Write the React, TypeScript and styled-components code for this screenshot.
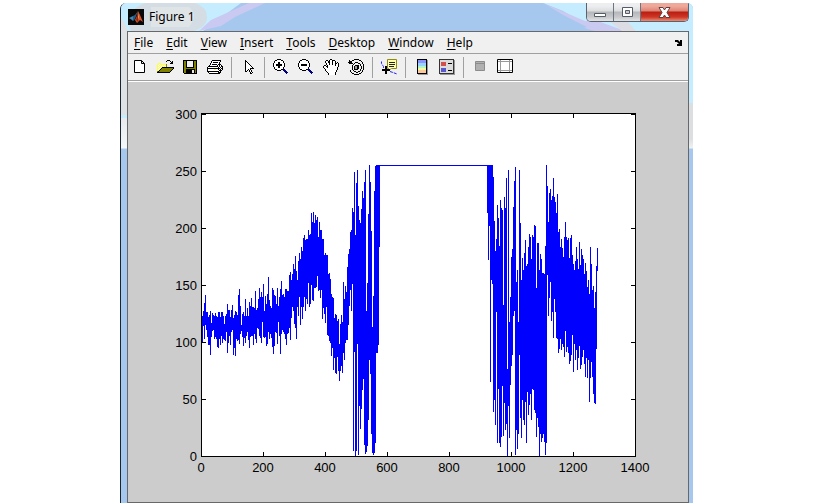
import React from "react";
import styled, { createGlobalStyle } from "styled-components";

const GlobalStyle = createGlobalStyle`
  *, *::before, *::after { box-sizing: border-box; }
  body { margin: 0; background: #fff; color: #000; }
`;

const Page = styled.div`
  padding: 3px 126px 0 120px;
`;

const Window = styled.main`
  position: relative;
  padding: 0 4px 0 6px;
  border-left: 1px solid #1c2430;
  border-radius: 6px 6px 0 0;
  overflow: hidden;
  background:
    linear-gradient(#dfe2e4 0 112px, #c5ecff 112px 115px, #e8ebed 115px, #f4f7f9 145px, #a6c8ee 146px) 0 0 / 50% 100% no-repeat,
    linear-gradient(#c5ecff 0 100px, #dcdfe2 100px 136px, #eef2f5 145px, #a6c8ee 146px);
`;

const Glass = styled.svg<{ $side: "left" | "right" }>`
  position: absolute;
  top: 0;
  ${(p) => p.$side}: 0;
`;

const TitleBar = styled.header`
  position: relative;
  display: flex;
  align-items: flex-start;
  height: 28px;
  padding-left: 1px;
`;

const Title = styled.h1`
  flex: 1;
  display: flex;
  align-items: center;
  gap: 5px;
  margin: 0;
  height: 28px;
  font: 400 12px/16px "Noto Sans", "Open Sans", sans-serif;
`;

const Controls = styled.div`
  display: flex;
  height: 19px;
  border: 1px solid #59636f;
  border-top: 0;
  border-radius: 0 0 5px 5px;
  overflow: hidden;
`;

const ControlButton = styled.button<{ $close?: boolean }>`
  display: flex;
  align-items: center;
  justify-content: center;
  width: ${(p) => (p.$close ? 47 : 27)}px;
  padding: 0;
  border: 0;
  border-right: ${(p) => (p.$close ? "0" : "1px solid #6d7680")};
  background: ${(p) =>
    p.$close
      ? "linear-gradient(#eea99b 0 3px, #dd8475 8px, #b91d10 9px, #cf3626 14px, #e58f75)"
      : "linear-gradient(#eceef0 0 3px, #dcdddf 8px, #b5b8bb 9px, #c6c8ca 14px, #e2e4e6)"};
`;

const Frame = styled.div`
  border: 1px solid #686868;
  background: #f0f0f0;
`;

const MenuBar = styled.nav`
  display: flex;
  align-items: center;
  gap: 13px;
  height: 22px;
  padding: 0 5px 0 6px;
  border-bottom: 1px solid #a0a0a0;
`;

const MenuButton = styled.button`
  padding: 0;
  border: 0;
  background: none;
  color: #000;
  font: 400 12px/18px "Noto Sans", "Open Sans", sans-serif;
  text-underline-offset: 2px;
`;

const DockButton = styled.button`
  display: flex;
  margin-left: auto;
  padding: 0;
  border: 0;
  background: none;
`;

const ToolBar = styled.div`
  display: flex;
  align-items: center;
  height: 27px;
  border-bottom: 1px solid #a0a0a4;
`;

const ToolButton = styled.button`
  display: flex;
  align-items: center;
  justify-content: center;
  width: 25px;
  height: 26px;
  padding: 0;
  border: 0;
  background: none;
`;

const Separator = styled.span`
  width: 1px;
  height: 21px;
  margin: 0 4px 0 3px;
  background: #a0a0a0;
`;

const Figure = styled.section`
  border-top: 1px solid #fff;
  background: #ccc;
`;

const Chart = styled.svg`
  display: block;
  width: 100%;
  font: 13px "Liberation Sans", Arial, sans-serif;
`;

/* ---------- icons ---------- */

const palette: Record<string, string> = {
  k: "#000",
  w: "#fff",
  y: "#ffff4a",
  o: "#808000",
  g: "#a0a0a0",
  n: "#000080",
};

function Bitmap({ rows, left = 0, top = 0 }: { rows: string[]; left?: number; top?: number }) {
  return (
    <>
      {Object.keys(palette).map((key) => {
        let d = "";
        rows.forEach((row, y) =>
          [...row].forEach((c, x) => {
            if (c === key) d += `M${x + left} ${y + top}h1v1h-1z`;
          })
        );
        return d ? <path key={key} d={d} fill={palette[key]} /> : null;
      })}
    </>
  );
}

const openRows = [
  "..........kkk....",
  ".........k...k.k.",
  "..............kk.",
  ".yyy.........kkk.",
  "yywyyyyyyo.......",
  "ywywywywyo.......",
  "yywywywywo.......",
  "ywywykkkkkkkkkkkk",
  "yywykoooooooooook",
  "ywykoooooooooook.",
  "yykoooooooooook..",
  "okoooooooooook...",
  "kkkkkkkkkkkkk....",
];
const printRows = [
  ".....kkkkkkkkk...",
  "....kwwwwwwwwk...",
  "....kwkkkkkwk....",
  "...kwwwwwwwwk....",
  "...kwkkkkkwkkk...",
  "..kwwwwwwwkwkwk..",
  ".kkkkkkkkkkwkwkk.",
  "kwwwwwwwwwwkwkwk.",
  "kkkkkkkkkkkkkwkk.",
  "kwwwwwwyywwkwkwk.",
  "kwwwwwwwwwwwkkk..",
  "kkkkkkkkkkkkwk...",
  ".kwwwwwwwwwkkk...",
  "..kkkkkkkkkkk....",
];
const cursorRows = [
  "k", "kk", "kwk", "kwwk", "kwwwk", "kwwwwk", "kwwwwwk", "kwwwwwwk",
  "kwwwwkkkk", "kwwkwk", "kwk.kwk", "kk..kwk", ".....kwk", ".....kk",
];
const zoomInRows = [
  "....kkkk.......",
  "..kkwwwwkk.....",
  ".kwwwwwwwwk....",
  ".kwwwkkwwwk....",
  "kwwwwkkwwwwk...",
  "kwwkkkkkkwwk...",
  "kwwkkkkkkwwk...",
  "kwwwwkkwwwwk...",
  ".kwwwkkwwwk....",
  ".kwwwwwwwwk....",
  "..kkwwwwkknn...",
  "....kkkk..nnn..",
  "...........nnn.",
  "............nnn",
  ".............n.",
];
const zoomOutRows = zoomInRows.map((row, y) =>
  y === 3 || y === 4 || y === 7 || y === 8 ? row.replace("kkww", "wwww") : row
);
const handRows = [
  ".......kk........",
  "...kk.kwwkkk.....",
  "..kwwkkwwkwwk....",
  "..kwwkkwwkwwk.k..",
  "...kwwkwwkwwkkwk.",
  "...kwwkwwkwwkwwk.",
  ".kk.kwwwwwwwkwwk.",
  "kwwkkwwwwwwwwwwk.",
  "kwwwkwwwwwwwwwk..",
  ".kwwwwwwwwwwwwk..",
  "..kwwwwwwwwwwwk..",
  "..kwwwwwwwwwwk...",
  "...kwwwwwwwwwk...",
  "....kwwwwwwwk....",
  ".....kwwwwwwk....",
  ".....kwwwwwwk....",
];
const rotateRows = [
  "......kkkkk......",
  ".k..kk.....kk....",
  ".kkk.........k...",
  "kkkk...kkk....k..",
  ".kkkk.k...kk..k..",
  ".....k......k..k.",
  "....k..kkkk.k..k.",
  "....k.kggkk..k.k.",
  "....k.kggkk..k.k.",
  "....k.kggkk..k.k.",
  "....k.kkkk..k..k.",
  "..k..k......k.k..",
  "..k...kk..kk..k..",
  "...k....kk...k...",
  "....kk.....kk....",
  "......kkkkk......",
];

type Tool = { label: string; art: React.ReactNode };

const tools: (Tool | null)[] = [
  {
    label: "New Figure",
    art: <path d="M2.5 1.5h7l3 3v9h-10zM9.5 1.5v3h3" fill="#fff" stroke="#000" />,
  },
  { label: "Open File", art: <Bitmap rows={openRows} top={1} /> },
  {
    label: "Save Figure",
    art: (
      <g shapeRendering="crispEdges">
        <path d="M1 1h14v14h-13l-1-1z" />
        <path d="M2 2h2v6h8v-6h2v12h-12z" fill="#808000" />
        <path d="M4 2h8v6h-8z" fill="#f0f0f0" />
        <path d="M4 1h1v7h-1zM11 1h1v7h-1zM4 8h8v1h-8zM4 10h9v4h-9z" />
        <path d="M10 11h2v3h-2z" fill="#e8e8e8" />
      </g>
    ),
  },
  { label: "Print Figure", art: <Bitmap rows={printRows} top={1} /> },
  null,
  { label: "Edit Plot", art: <Bitmap rows={cursorRows} left={5} top={1} /> },
  null,
  { label: "Zoom In", art: <Bitmap rows={zoomInRows} /> },
  { label: "Zoom Out", art: <Bitmap rows={zoomOutRows} /> },
  { label: "Pan", art: <Bitmap rows={handRows} /> },
  { label: "Rotate 3D", art: <Bitmap rows={rotateRows} /> },
  null,
  {
    label: "Data Cursor",
    art: (
      <>
        <path d="M.5 2.5v2l2 3v2M9 12.5l3 1 4 1.5" fill="none" stroke="#2020ff" strokeDasharray="3 1" />
        <path d="M6.5.5h9v9h-5l-3 2v-2h-1z" fill="#ffffa8" stroke="#8c8c10" />
        <path d="M8 3.5h6M8 5.5h6M8 7.5h5" stroke="#222" />
        <path d="M1 11h8M5 7v8" stroke="#000" strokeWidth="2" />
      </>
    ),
  },
  null,
  {
    label: "Insert Colorbar",
    art: (
      <g shapeRendering="crispEdges">
        <path d="M3 0h10v15h-10z" />
        <path d="M13 1h1v15h-10v-1h9z" fill="#999" />
        <path d="M4 1h8v4h-8z" fill="#8c94ff" />
        <path d="M4 4h8v3h-8z" fill="#99d4ff" />
        <path d="M4 7h8v2h-8z" fill="#b0f6c8" />
        <path d="M4 9h8v2h-8z" fill="#f4f9a4" />
        <path d="M4 11h8v3h-8z" fill="#ffc79c" />
      </g>
    ),
  },
  {
    label: "Insert Legend",
    art: (
      <g shapeRendering="crispEdges">
        <path d="M1 15h14v-14h1v15h-15z" fill="#999" />
        <path d="M.5.5h14v14h-14z" fill="#dcdcdc" stroke="#333" />
        <path d="M2 3h5v4h-5z" fill="#d05050" />
        <path d="M2 9h5v4h-5z" fill="#5858cc" />
        <path d="M9 4h4v1h-4zM9 11h4v1h-4z" />
      </g>
    ),
  },
  null,
  {
    label: "Hide Plot Tools",
    art: (
      <>
        <path d="M3.5 2.5h9v9h-9z" fill="#b0b0b0" stroke="#8c8c8c" />
        <path d="M4 4.5h8" stroke="#8c8c8c" />
      </>
    ),
  },
  {
    label: "Show Plot Tools",
    art: (
      <>
        <path d="M.5.5h15v13h-15z" fill="#fff" stroke="#000" />
        <path d="M1 2.5h14M1 11.5h14M3.5 1v12M12.5 1v12" stroke="#999" />
        <path d="M4 3h8v8h-8z" fill="#fff" />
      </>
    ),
  },
];

const Logo = () => (
  <svg width="16" height="16" viewBox="0 0 16 16" aria-hidden="true">
    <path d="M0 0h16v16H0z" fill="#080808" />
    <path d="M1 9l4-2 2 1-2 4-1-1z" fill="#3f86b8" />
    <path d="M5 7l2-1 3-4-3 8-2 2z" fill="#2a5a80" />
    <path d="M10 2l2 4 3 7-3-2-3 3-2-3 2-4z" fill="#d9532c" />
    <path d="M10 2l1 5-1 6-2-2z" fill="#8c2a12" />
    <path d="M10 3l1 5-1 3z" fill="#f6a04c" />
  </svg>
);

/* ---------- plotted signal: [top, bottom] of the trace in each pixel column ---------- */

const firstBurst: number[][] = [
  [316,342],[311,326],[303,339],[295,325],[312,330],[312,337],[317,345],[315,345],[311,355],[323,337],
  [313,331],[315,330],[316,339],[313,337],[316,339],[317,347],[312,348],[312,339],[317,345],[312,336],
  [312,343],[316,339],[324,340],[316,341],[314,332],[304,353],[310,343],[310,336],[317,345],[310,332],
  [305,330],[318,355],[315,348],[311,356],[312,339],[315,341],[295,340],[289,344],[306,334],[325,331],
  [314,337],[312,346],[316,338],[299,343],[316,336],[308,332],[316,340],[302,348],[306,337],[298,336],
  [307,336],[307,345],[308,334],[291,339],[310,343],[308,328],[299,329],[288,336],[297,338],[292,343],
  [297,322],[284,337],[311,338],[296,337],[304,346],[294,344],[277,332],[300,339],[306,334],[308,338],
  [288,347],[290,354],[295,346],[296,332],[304,333],[288,344],[306,322],[297,336],[289,354],[281,334],
  [295,330],[294,332],[297,334],[289,339],[289,345],[291,334],[291,333],[275,328],[272,340],[280,318],
  [274,307],[264,311],[269,324],[256,328],[271,339],[280,307],[261,316],[253,297],[259,325],[247,307],
  [251,319],[238,307],[235,297],[240,311],[239,299],[239,304],[230,283],[235,307],[234,304],[213,285],
  [222,300],[212,301],[223,288],[215,288],[220,287],[217,276],[237,291],[222,290],[230,298],[230,290],
  [239,319],[239,308],[255,314],[253,323],[255,307],[255,335],[274,336],[273,341],[279,343],[294,356],
  [297,348],[298,370],[318,358],[314,373],[315,374],[321,357],[319,371],[344,381],[324,371],[315,366],
  [322,373],[282,353],[299,360],[286,343],[292,340],[267,340],[254,325],[249,306],[232,290],[230,311],
  [208,284],[212,451],[172,352],[235,456],[183,451],[170,344],[206,455],[220,406],[223,429],[209,409],
  [191,390],[198,379],[182,445],[170,454],[311,452],[283,446],[214,420],[165,360],[182,374],[231,434],
  [327,453],[296,455],[191,453],[166,443],[165,353],[165,353],[165,345],[165,247],
];
const secondBurst: number[][] = [
  [165,213],[165,260],[165,226],[165,382],[165,280],[165,284],[177,412],[221,400],[251,425],[239,312],
  [205,443],[218,389],[246,443],[200,447],[208,437],[210,386],[305,436],[197,403],[208,430],[178,424],
  [369,456],[170,406],[322,438],[297,385],[257,366],[249,355],[207,316],[181,311],[167,455],[282,430],
  [270,449],[322,434],[170,355],[223,418],[280,438],[258,400],[270,420],[253,425],[240,402],[266,443],
  [264,392],[247,415],[234,405],[237,394],[259,420],[235,389],[237,390],[225,410],[226,413],[288,437],
  [243,418],[243,427],[270,456],[254,434],[259,442],[273,438],[273,434],[274,442],[246,455],[165,443],
  [186,275],[222,316],[193,298],[189,282],[200,321],[196,312],[178,338],[197,299],[202,312],[213,338],
  [194,339],[232,353],[229,349],[247,339],[239,350],[248,344],[257,347],[237,357],[222,331],[237,352],
  [240,347],[238,353],[258,364],[238,361],[235,355],[255,335],[264,372],[270,344],[261,360],[247,350],
  [259,370],[269,358],[242,346],[265,369],[249,365],[255,357],[259,350],[274,364],[263,377],[271,358],
  [287,378],[280,360],[294,402],[247,378],[264,362],[290,377],[286,394],[308,403],[292,404],[266,349],
  [248,271],
];

const columns = (start: number, data: number[][]) =>
  data.map(([top, bottom], i) => `M${start + i} ${top}h1V${bottom}h-1z`).join("");

const AXIS = { left: 201, right: 635, top: 114, bottom: 456 };
const xTicks = [0, 200, 400, 600, 800, 1000, 1200, 1400];
const yTicks = [0, 50, 100, 150, 200, 250, 300];
const xPos = (v: number) => Math.round(AXIS.left + (v / 1400) * (AXIS.right - AXIS.left));
const yPos = (v: number) => Math.round(AXIS.bottom - (v / 300) * (AXIS.bottom - AXIS.top));

function SignalChart() {
  return (
    <Chart viewBox="128 82 560 420" role="img" aria-label="Signal amplitude from 0 to 1400">
      <g shapeRendering="crispEdges">
        <rect x="201" y="113" width="435" height="344" fill="#fff" />
        <path d={columns(202, firstBurst) + "M376 165h112v1h-112z" + columns(487, secondBurst)} fill="#0000ff" />
        <path d="M201 113h435v344h-435zM202 114v342h433v-342z" fillRule="evenodd" />
        {xTicks.map((v) => (
          <path key={v} d={`M${xPos(v)} 114h1v4h-1zM${xPos(v)} 452h1v4h-1z`} />
        ))}
        {yTicks.map((v) => (
          <path key={v} d={`M202 ${yPos(v)}h4v1h-4zM631 ${yPos(v)}h4v1h-4z`} />
        ))}
      </g>
      {xTicks.map((v) => (
        <text key={v} x={xPos(v)} y="472" textAnchor="middle">{v}</text>
      ))}
      {yTicks.map((v) => (
        <text key={v} x="197" y={yPos(v) + 5} textAnchor="end">{v}</text>
      ))}
    </Chart>
  );
}

const menus = ["File", "Edit", "View", "Insert", "Tools", "Desktop", "Window", "Help"];

export default function App() {
  return (
    <>
      <GlobalStyle />
      <Page>
        <Window>
          <Glass $side="left" width="573" height="28" viewBox="0 0 573 28" aria-hidden="true">
            <path d="M0 0h573v28H0z" fill="#a6c8ee" />
            <path d="M0 0h120l-38 28H0z" fill="#c5ecff" />
            <path d="M90 17l38-17h16l-30 14-14 9-22 5z" fill="#c9c9f2" />
            <path d="M24 0h50q12 4 12 14t-14 14H10q-8-20 14-28z" fill="#d3dde3" />
            <path d="M30 4h38q10 8 0 20H30z" fill="#dfe4e7" />
            <path d="M0 14l7 14H0z" fill="#dfe1e3" />
          </Glass>
          <Glass $side="right" width="150" height="28" viewBox="0 0 150 28" aria-hidden="true">
            <path d="M0 0h150v28H68L40 20 20 8z" fill="#c5ecff" />
            <path d="M0 0l20 12 24 14 8 2h30l-30-11-10 1z" fill="#c9c9f2" />
            <path d="M0 0l20 12 24 12-12 2z" fill="#a6c8ee" />
            <path d="M66 18h18l9 10h-14z" fill="#dcdde4" />
          </Glass>
          <TitleBar>
            <Title>
              <Logo />
              Figure 1
            </Title>
            <Controls>
              <ControlButton aria-label="Minimize">
                <svg width="13" height="11" viewBox="0 0 13 11">
                  <path d="M.5 6.5h11v3h-11z" fill="#fff" stroke="#555c66" />
                </svg>
              </ControlButton>
              <ControlButton aria-label="Maximize">
                <svg width="13" height="11" viewBox="0 0 13 11">
                  <path d="M1.5.5h10v9h-10z" fill="#fff" stroke="#555c66" />
                  <path d="M4.5 3.5h4v3h-4z" fill="#ccc" stroke="#555c66" />
                </svg>
              </ControlButton>
              <ControlButton $close aria-label="Close">
                <svg width="13" height="11" viewBox="0 0 13 11">
                  <path
                    d="M1 .5h4l1.500 2.500 1.500-2.500h4l-3 5 3 5h-4l-1.500-2.500-1.500 2.500h-4l3-5z"
                    fill="#fff"
                    stroke="#60403e"
                  />
                </svg>
              </ControlButton>
            </Controls>
          </TitleBar>
          <Frame>
            <MenuBar aria-label="Figure menu">
              {menus.map((name) => (
                <MenuButton key={name}>
                  <u>{name[0]}</u>
                  {name.slice(1)}
                </MenuButton>
              ))}
              <DockButton aria-label="Dock Figure">
                <svg width="8" height="7" viewBox="0 0 8 7">
                  <path d="M0 1h3l2 2V1h2v6H2V5h2L2 3H0z" />
                </svg>
              </DockButton>
            </MenuBar>
            <ToolBar role="toolbar" aria-label="Figure tools">
              {tools.map((tool, i) =>
                tool ? (
                  <ToolButton key={tool.label} aria-label={tool.label}>
                    <svg width="17" height="16" viewBox="0 0 17 16" aria-hidden="true">
                      {tool.art}
                    </svg>
                  </ToolButton>
                ) : (
                  <Separator key={i} />
                )
              )}
            </ToolBar>
            <Figure>
              <SignalChart />
            </Figure>
          </Frame>
        </Window>
      </Page>
    </>
  );
}
